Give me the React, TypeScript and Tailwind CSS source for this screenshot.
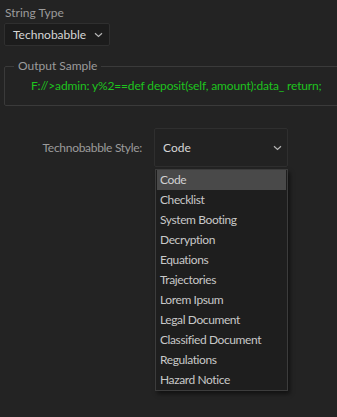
import React from "react";

const items = [
  "Code",
  "Checklist",
  "System Booting",
  "Decryption",
  "Equations",
  "Trajectories",
  "Lorem Ipsum",
  "Legal Document",
  "Classified Document",
  "Regulations",
  "Hazard Notice",
];

function Chevron() {
  return (
    <svg width="9" height="6" viewBox="0 0 9 6" fill="none">
      <path d="M1 1.2 L4.5 4.5 L8 1.2" stroke="#b4b4b4" strokeWidth="1.2" />
    </svg>
  );
}

export default function App() {
  return (
    <div
      className="relative w-[337px] h-[417px] overflow-hidden bg-[#232323] text-[12px]"
      style={{ fontFamily: "Lato, 'Noto Sans', sans-serif" }}
    >
      <div className="pt-[5px] pl-[5px] text-[#9b9b9b] leading-[16px]">String Type</div>
      <div className="mt-[2px] ml-[4px] w-[106px] h-[23px] rounded-[2px] border border-[#2f2f2f] bg-[#1c1c1c] flex items-center justify-between pl-[8px] pr-[6px]">
        <span className="text-[#d6d6d6]">Technobabble</span>
        <Chevron />
      </div>

      <fieldset className="mt-[13px] ml-[4px] w-[360px] h-[47px] border border-[#3a3a3a] rounded-[2px] pl-[9px]">
        <legend className="px-[4px] text-[#9b9b9b] leading-[14px]">Output Sample</legend>
        <div className="pl-[17px] pt-[5px] text-[#1ec41e] leading-[16px] tracking-[-0.15px]">
          F://&gt;admin: y%2==def deposit(self, amount):data_ return;
        </div>
      </fieldset>

      <div className="mt-[22px] flex items-center">
        <div className="w-[154px] pr-[12px] text-right whitespace-nowrap text-[#9b9b9b] tracking-[-0.3px]">Technobabble Style:</div>
        <div className="w-[134px] h-[39px] rounded-[2px] border border-[#2f2f2f] bg-[#222222] flex items-center justify-between pl-[8px] pr-[5px]">
          <span className="text-[#d6d6d6]">Code</span>
          <Chevron />
        </div>
      </div>

      <div className="absolute left-[155px] top-[169px] w-[133px] border border-[#3c3c3c] bg-[#1e1e1e] shadow-[2px_3px_4px_rgba(0,0,0,0.5)] px-[1px] tracking-[-0.4px]">
        {items.map((it, i) => (
          <div
            key={it}
            className={
              "h-[20px] flex items-center pl-[3px] " +
              (i === 0 ? "bg-[#494949] text-[#d2d2d2]" : "text-[#c8c8c8]")
            }
          >
            {it}
          </div>
        ))}
      </div>
    </div>
  );
}
